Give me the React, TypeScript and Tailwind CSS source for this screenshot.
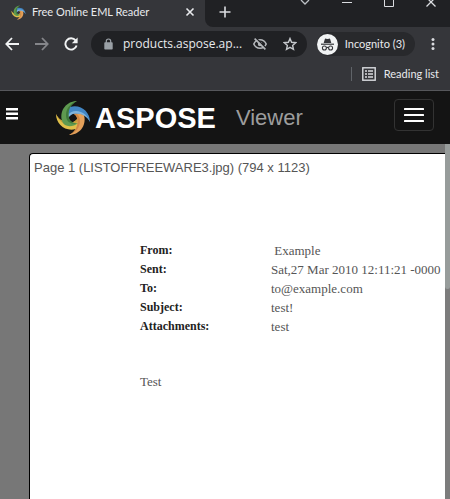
import { useState } from "react";
import type { ReactNode } from "react";

const headers = [
  { label: "From:", value: "\u00a0Example" },
  { label: "Sent:", value: "Sat,27 Mar 2010 12:11:21 -0000" },
  { label: "To:", value: "to@example.com" },
  { label: "Subject:", value: "test!" },
  { label: "Attachments:", value: "test" },
];

const blades = [
  { angle: 180, fill: "#e0c04a", shade: "#c9a03a" },
  { angle: 90, fill: "#e3a05a", shade: "#d08844" },
  { angle: 0, fill: "#4286c4", shade: "#7fb4dc" },
  { angle: -90, fill: "#5f9a50", shade: "#3f7a3c" },
];

function Swirl({ className }: { className: string }) {
  return (
    <svg viewBox="-18 -18 36 36" className={className} aria-hidden="true">
      {blades.map((b) => (
        <g key={b.angle} transform={`rotate(${b.angle})`}>
          <path fill={b.fill} d="M17 4C17-6 8-14-3-11C-9-9-10-1-5 5C-6 0-3-4 2-4.5C9-5 14-2 17 4Z" />
          <path fill={b.shade} d="M-5 5C-7-2-4-7 3-7C10-7 15-2 17 4C14-2 9-5 2-4.5C-3-4-6 0-5 5Z" />
        </g>
      ))}
    </svg>
  );
}

function IconButton({ label, className, children }: { label: string; className?: string; children: ReactNode }) {
  return (
    <button aria-label={label} className={`flex shrink-0 items-center justify-center ${className ?? ""}`}>
      {children}
    </button>
  );
}

function TabStrip() {
  return (
    <div className="flex h-[27px] overflow-hidden bg-[#35363a]">
      <div className="flex w-[205px] shrink-0 items-center pb-[3px] pl-[11px] pr-2.5">
        <Swirl className="size-[15px] shrink-0" />
        <span className="ml-1.5 flex-1 whitespace-nowrap font-['Lato',sans-serif] text-[11px] leading-4 text-[#e8eaed]">
          Free Online EML Reader
        </span>
        <IconButton label="Close tab">
          <svg viewBox="0 0 10 10" className="size-2.5" stroke="#e8eaed" strokeWidth="1.6">
            <path d="M1.5 1.5l7 7M8.5 1.5l-7 7" />
          </svg>
        </IconButton>
      </div>
      <div className="flex flex-1 items-start justify-between rounded-bl-lg bg-[#202124] pl-3.5 pr-3.5">
        <IconButton label="New tab" className="mt-1.5">
          <svg viewBox="0 0 12 12" className="size-3" stroke="#dadce0" strokeWidth="1.6">
            <path d="M6 0.5v11M0.5 6h11" />
          </svg>
        </IconButton>
        <div className="flex gap-8">
          <IconButton label="Search tabs">
            <svg viewBox="0 0 10 8" className="h-2 w-2.5" fill="none" stroke="#bdc1c6" strokeWidth="1.3">
              <path d="M1 0l4 4 4-4" />
            </svg>
          </IconButton>
          <IconButton label="Minimize">
            <svg viewBox="0 0 10 8" className="h-2 w-2.5" stroke="#dadce0">
              <path d="M0 2.5h10" />
            </svg>
          </IconButton>
          <IconButton label="Maximize">
            <svg viewBox="0 0 10 8" className="h-2 w-2.5" fill="none" stroke="#dadce0">
              <path d="M0.5-2.5h9v9h-9z" />
            </svg>
          </IconButton>
          <IconButton label="Close window">
            <svg viewBox="0 0 10 8" className="h-2 w-2.5" stroke="#dadce0" strokeWidth="1.3">
              <path d="M0.5-2.5l9 9M9.5-2.5l-9 9" />
            </svg>
          </IconButton>
        </div>
      </div>
    </div>
  );
}

function Toolbar() {
  return (
    <div className="flex h-[34px] items-center bg-[#35363a] pl-[5px] pr-[15px]">
      <IconButton label="Back">
        <svg viewBox="0 0 14 14" className="size-3.5" fill="none" stroke="#f1f3f4" strokeWidth="1.8">
          <path d="M14 7H1.5M7 1L1.3 7 7 13" />
        </svg>
      </IconButton>
      <IconButton label="Forward" className="ml-4">
        <svg viewBox="0 0 14 14" className="size-3.5" fill="none" stroke="#85868a" strokeWidth="1.8">
          <path d="M0 7h12.5M7 1l5.7 6L7 13" />
        </svg>
      </IconButton>
      <IconButton label="Reload" className="ml-[15px]">
        <svg viewBox="0 0 14 14" className="size-3.5" fill="none" stroke="#f1f3f4" strokeWidth="1.9">
          <path d="M11.6 3.4A5.7 5.7 0 1 0 12.6 8.5" />
          <path d="M13.6 0.4v5.8H7.8z" fill="#f1f3f4" stroke="none" />
        </svg>
      </IconButton>
      <div className="ml-[13px] flex h-[26px] min-w-0 flex-1 items-center rounded-full bg-[#202124] pl-[13px] pr-2.5">
        <svg viewBox="0 0 9 12" className="h-3 w-[9px] shrink-0" aria-hidden="true">
          <path d="M2.3 5V3.2a2.2 2.2 0 0 1 4.4 0V5" fill="none" stroke="#9aa0a6" strokeWidth="1.2" />
          <rect x="0.3" y="4.3" width="8.4" height="7.2" rx="0.8" fill="#9aa0a6" />
        </svg>
        <input
          aria-label="Address"
          readOnly
          value="products.aspose.ap..."
          className="ml-2.5 w-0 min-w-0 flex-1 bg-transparent text-[12px] leading-4 text-[#e8eaed] outline-none"
        />
        <IconButton label="Third-party cookies blocked" className="ml-1.5">
          <svg viewBox="0 0 14 14" className="size-3.5" fill="none" stroke="#b4b7bb" strokeWidth="1.6">
            <path d="M0.8 7C2 4.3 4.3 2.8 7 2.8S12 4.3 13.2 7C12 9.7 9.7 11.2 7 11.2S2 9.7 0.8 7z" />
            <circle cx="7" cy="7" r="2.2" fill="#b4b7bb" stroke="none" />
            <path d="M2.6 0.8l10.4 10.4" stroke="#202124" />
            <path d="M1.6 1.6l10.8 10.8" />
          </svg>
        </IconButton>
        <IconButton label="Bookmark this tab" className="ml-4">
          <svg viewBox="0 0 14 14" className="size-3.5" fill="none" stroke="#c4c7cb" strokeWidth="1.4">
            <path d="M7 1.5l1.6 3.8 4.1 0.4-3.1 2.7 0.9 4L7 10.3l-3.5 2.1 0.9-4-3.1-2.7 4.1-0.4z" />
          </svg>
        </IconButton>
      </div>
      <button className="ml-2.5 flex h-6 shrink-0 items-center rounded-full bg-[#28292c] pr-2.5 font-['Lato',sans-serif] text-[11px] leading-4 text-[#e8eaed]">
        <svg viewBox="0 0 21 21" className="mr-[7px] size-[21px]" aria-hidden="true">
          <circle cx="10.5" cy="10.5" r="10.5" fill="#f1f3f4" />
          <path d="M6.7 9L7.8 5.2c0.2-0.6 0.6-0.7 1.2-0.5l1.5 0.4 1.5-0.4c0.6-0.2 1 0 1.2 0.5L14.3 9z" fill="#35363a" />
          <path d="M4 10.2h13" stroke="#35363a" strokeWidth="1.2" />
          <g fill="none" stroke="#35363a" strokeWidth="1.1">
            <circle cx="7.4" cy="14" r="2" />
            <circle cx="13.6" cy="14" r="2" />
            <path d="M9.4 13.8q1.1-0.8 2.2 0" />
          </g>
        </svg>
        Incognito (3)
      </button>
      <IconButton label="Menu" className="ml-4">
        <svg viewBox="0 0 4 14" className="h-3.5 w-1" fill="#dadce0">
          <circle cx="2" cy="2.5" r="1.5" />
          <circle cx="2" cy="7" r="1.5" />
          <circle cx="2" cy="11.5" r="1.5" />
        </svg>
      </IconButton>
    </div>
  );
}

function BookmarksBar() {
  return (
    <div className="flex h-[30px] items-center justify-end border-b border-[#56575b] bg-[#35363a] pb-1 pr-[11px]">
      <div className="h-3.5 w-px bg-[#5f6368]" />
      <button className="ml-2.5 flex items-center font-['Lato',sans-serif] text-[11px] leading-4 text-[#e8eaed]">
        <svg viewBox="0 0 14 14" className="mr-2 size-3.5" fill="none" stroke="#dadce0" aria-hidden="true">
          <rect x="0.8" y="0.8" width="12.4" height="12.4" strokeWidth="1.4" />
          <path d="M3 4h2M6 4h5M3 7h2M6 7h5M3 10h2M6 10h5" strokeWidth="1.4" />
        </svg>
        Reading list
      </button>
    </div>
  );
}

function SiteNav({ open, onToggle }: { open: boolean; onToggle: () => void }) {
  return (
    <nav className="flex h-[53px] items-center bg-[#141414] pl-1.5 pr-4 font-['Liberation_Sans',sans-serif]">
      <IconButton label="Side menu" className="mb-2">
        <svg viewBox="0 0 12 12" className="size-3" fill="#fff">
          <path d="M0 0h12v2.5H0zM0 4.5h12V7H0zM0 9h12v2.5H0z" />
        </svg>
      </IconButton>
      <a href="#" className="ml-[37px] flex items-center">
        <Swirl className="size-9" />
        <span className="ml-1 text-[29px] font-bold leading-8 text-white">ASPOSE</span>
      </a>
      <a href="#" className="ml-5 text-[22px] leading-8 text-[#9d9d9d]">Viewer</a>
      <button
        aria-label="Toggle navigation"
        aria-expanded={open}
        onClick={onToggle}
        className="mb-1.5 ml-auto flex h-8 w-10 items-center justify-center rounded border border-[#333]"
      >
        <svg viewBox="0 0 20 14" className="h-3.5 w-5" fill="#fff">
          <rect width="20" height="2" rx="0.5" />
          <rect y="6" width="20" height="2" rx="0.5" />
          <rect y="12" width="20" height="2" rx="0.5" />
        </svg>
      </button>
    </nav>
  );
}

export default function App() {
  const [open, setOpen] = useState(false);

  return (
    <div className="flex min-h-screen flex-col overflow-hidden bg-[#777] font-['Open_Sans',sans-serif]">
      <header>
        <TabStrip />
        <Toolbar />
        <BookmarksBar />
        <SiteNav open={open} onToggle={() => setOpen(!open)} />
      </header>
      <div className="flex flex-1">
        <main className="flex min-w-0 flex-1 pl-[29px] pt-[9px]">
          <section className="min-w-0 flex-1 overflow-hidden rounded-tl-sm border-l border-t border-black bg-white">
            <h1 className="whitespace-nowrap pl-1 pt-1 font-['Liberation_Sans',sans-serif] text-[13px] leading-5 text-[#555]">
              Page 1 (LISTOFFREEWARE3.jpg) (794 x 1123)
            </h1>
            <div className="whitespace-nowrap pl-[110px] pt-[63px] font-['Liberation_Serif',serif] text-[13px] leading-[19px] text-[#555]">
              <table>
                <tbody>
                  {headers.map((h) => (
                    <tr key={h.label}>
                      <th className="w-[131px] min-w-[131px] p-0 text-left text-[12px] font-bold text-[#222]">{h.label}</th>
                      <td className="p-0">{h.value}</td>
                    </tr>
                  ))}
                </tbody>
              </table>
              <p className="pt-9">Test</p>
            </div>
          </section>
        </main>
        <div className="w-[5px] shrink-0 bg-[#7c7c7c]">
          <div className="h-[37vh] max-h-[145px] rounded-b bg-[#979c9b]" />
        </div>
      </div>
    </div>
  );
}
